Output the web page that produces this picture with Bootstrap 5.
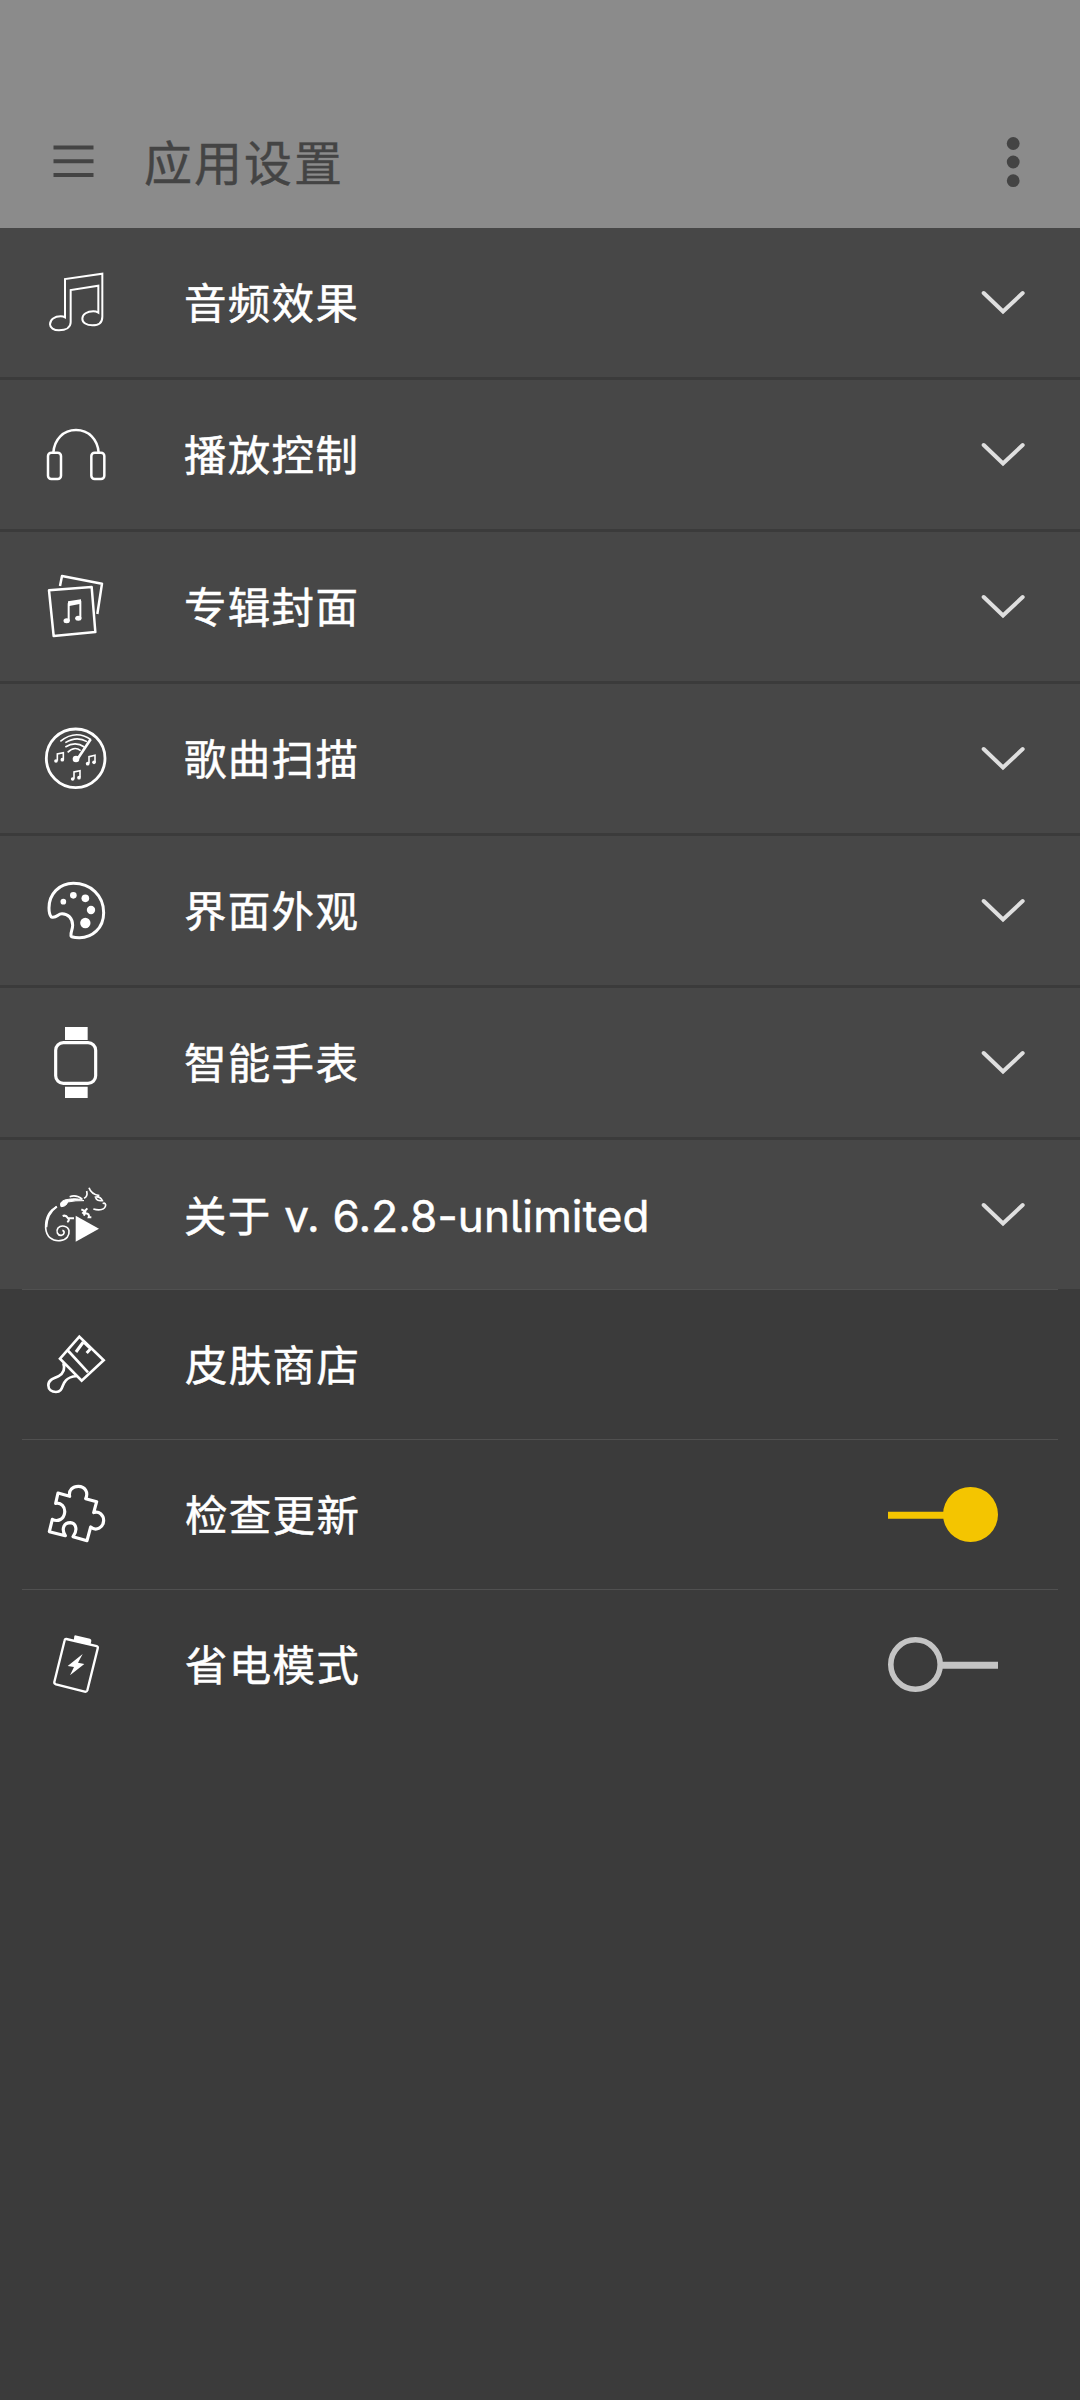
<!DOCTYPE html>
<html lang="zh-CN">
<head>
<meta charset="utf-8">
<meta name="viewport" content="width=device-width, initial-scale=1">
<title>应用设置</title>
<link href="https://cdn.jsdelivr.net/npm/bootstrap@5.3.0/dist/css/bootstrap.min.css" rel="stylesheet">
<style>
  body { background: #3b3b3b; font-family: Inter, "Noto Sans CJK SC", sans-serif; min-height: 2400px; }
  .app-bar { height: 228px; background: #8b8b8b; padding: 96px 56px 0 53px; color: #444; }
  .app-title { font-size: 48px; letter-spacing: 2px; line-height: 60px; margin: 4px 0 0 50px; font-weight: 400; -webkit-text-stroke: .4px #444; }
  .group-row { height: 149px; background: #474747; margin-bottom: 3px; padding: 0 54px 0 40px; }
  .group-row:last-child { margin-bottom: 0; }
  .plain-list { margin: 0 22px; }
  .plain-row { height: 150px; border-top: 1px solid #505050; padding: 0 60px 0 18px; }
  .plain-row .row-label { margin-left: 75px; }
  .row-icon { width: 70px; height: 81px; flex: none; fill: none; stroke: #fff; }
  .row-label { color: #fff; font-size: 42.5px; letter-spacing: 1.3px; line-height: 60px; margin: 3px 0 0 74px; font-weight: 400; white-space: pre; -webkit-text-stroke: .5px #fff; }
  .version-text { font-size: 44px; font-feature-settings: "cv05"; letter-spacing: .15px; }
  .chevron { width: 46px; height: 26px; margin-left: auto; fill: none; stroke: #dfdfdf; stroke-width: 4; stroke-linecap: round; }
</style>
</head>
<body>
<header class="app-bar d-flex align-items-center">
  <svg width="41" height="34" viewBox="0 0 41 34" stroke="#444" stroke-width="4"><path d="M0.500 2.500H40.500M0.500 16.300H40.500M0.500 30H40.500"/></svg>
  <h1 class="app-title mb-0">应用设置</h1>
  <svg class="ms-auto" width="22" height="52" viewBox="0 0 22 52" fill="#444"><circle cx="11.200" cy="7.500" r="6.400"/><circle cx="11.200" cy="26" r="6.400"/><circle cx="11.200" cy="44.700" r="6.400"/></svg>
</header>
<main>
  <section>
    <div class="group-row d-flex align-items-center">
      <svg class="row-icon" viewBox="120 486 210 243" stroke-width="6"><path d="M195 652V537L307 521V650C307 667 296 676 277 676C260 676 247 668 247 656C247 642 262 634 280 634Q288 634 295 638V557L212 570V667C212 682 198 691 177 691C161 691 150 683 150 673C150 658 164 649 182 649Q190 649 195 652Z"/></svg>
      <span class="row-label">音频效果</span>
      <svg class="chevron" viewBox="0 0 46 26"><path d="M3.700 3L23 21.500L42.700 3"/></svg>
    </div>
    <div class="group-row d-flex align-items-center">
      <svg class="row-icon" viewBox="30 42 210 243" stroke-width="7.500"><path d="M70 158C73 118 100 90 138 90C176 90 203 118 206 158"/><rect x="54" y="158" width="39" height="79" rx="10"/><rect x="184" y="158" width="39" height="79" rx="10"/></svg>
      <span class="row-label">播放控制</span>
      <svg class="chevron" viewBox="0 0 46 26"><path d="M3.700 3L23 21.500L42.700 3"/></svg>
    </div>
    <div class="group-row d-flex align-items-center">
      <svg class="row-icon" viewBox="30 498 210 243" stroke-width="7.500" stroke-linejoin="round"><path d="M57 571L185 561L196 696L71 708ZM90 558L96 528L216 551L202 642"/><path d="M116 663V611L151 604V655" stroke-width="6"/><path d="M114 604L153 598V611L114 619Z" fill="#fff" stroke="none"/><g fill="#fff" stroke="none"><ellipse cx="110" cy="662" rx="9.500" ry="7.500"/><ellipse cx="145" cy="655" rx="9.500" ry="7.500"/></g></svg>
      <span class="row-label">专辑封面</span>
      <svg class="chevron" viewBox="0 0 46 26"><path d="M3.700 3L23 21.500L42.700 3"/></svg>
    </div>
    <div class="group-row d-flex align-items-center">
      <svg class="row-icon" viewBox="30 54 210 243" stroke-width="4.800"><circle cx="137" cy="175" r="88" stroke-width="8.500"/><path d="M91 124Q137 87 183 119M106 128Q140 107 171 125M106 141Q136 122 163 141M113 157Q133 137 152 152"/><path d="M182 118L143 176" stroke-width="8"/><circle cx="138" cy="177" r="10" fill="#fff" stroke="none"/>
        <g id="smallNote"><path d="M82 182V162L100 158V178"/><circle cx="78" cy="183" r="5.500" fill="#fff" stroke="none"/><circle cx="97" cy="179" r="5.500" fill="#fff" stroke="none"/></g><use href="#smallNote" x="95" y="8"/><use href="#smallNote" x="50" y="54"/></svg>
      <span class="row-label">歌曲扫描</span>
      <svg class="chevron" viewBox="0 0 46 26"><path d="M3.700 3L23 21.500L42.700 3"/></svg>
    </div>
    <div class="group-row d-flex align-items-center">
      <svg class="row-icon" viewBox="30 510 210 243" stroke-width="9"><path d="M64 651Q57 643 57 624C57 582 88 550 130 550C182 550 221 587 221 638C221 685 186 714 147 713Q121 713 123 705C122 696 128 688 128 676C128 655 114 641 96 641C82 641 82 655 64 651Z" stroke-linejoin="round"/><g fill="#fff" stroke="none"><circle cx="100" cy="605" r="8.500"/><circle cx="130" cy="586" r="10"/><circle cx="166" cy="595" r="11.500"/><circle cx="183" cy="630" r="12.500"/><circle cx="166" cy="669" r="15.500"/></g></svg>
      <span class="row-label">界面外观</span>
      <svg class="chevron" viewBox="0 0 46 26"><path d="M3.700 3L23 21.500L42.700 3"/></svg>
    </div>
    <div class="group-row d-flex align-items-center">
      <svg class="row-icon" viewBox="30 66 210 243"><rect x="77" y="128" width="120" height="122" rx="23" stroke-width="9.500"/><path d="M105 81H173V120H105ZM105 260H173V294H105Z" fill="#fff" stroke="none"/></svg>
      <span class="row-label">智能手表</span>
      <svg class="chevron" viewBox="0 0 46 26"><path d="M3.700 3L23 21.500L42.700 3"/></svg>
    </div>
    <div class="group-row d-flex align-items-center">
      <svg class="row-icon" viewBox="30 522 210 243" stroke-width="5"><path d="M137 647L207 686L137 725Z" fill="#fff" stroke="none"/><path d="M81 620C58 631 46 655 47 684C49 711 67 724 90 722C110 720 119 706 117 692C114 677 93 674 84 684C77 694 83 707 94 706C104 704 105 693 97 691"/><path d="M80 620C60 634 50 652 49 682" stroke-width="6"/><path d="M93 620C88 609 96 600 115 598Q142 593 162 602Q138 601 113 606Q109 620 93 620Z" fill="#fff" stroke-width="3"/><path d="M119 590Q140 583 157 598M162 595Q174 590 170 573M177 563Q183 582 208 587M194 592Q209 587 217 602Q202 604 197 594M218 611Q225 606 227 615C226 630 207 632 190 627"/><path d="M98 648Q108 644 114 655L132 655M112 667Q118 662 117 653M154 628L166 634L162 647M166 640Q180 641 176 652L184 652M157 641L172 625" stroke-width="6"/></svg>
      <span class="row-label">关于<span class="version-text"> v. 6.2.8-unlimited</span></span>
      <svg class="chevron" viewBox="0 0 46 26"><path d="M3.700 3L23 21.500L42.700 3"/></svg>
    </div>
  </section>
  <section class="plain-list">
    <div class="plain-row d-flex align-items-center">
      <svg class="row-icon" viewBox="120 162 210 243" stroke-width="8"><path d="M238 200L311 271L245 332L180 266ZM205 243L264 307M190 279C196 297 190 311 175 319C158 326 145 331 145 346C145 358 155 366 168 366C190 366 184 344 197 332C207 320 218 319 230 318"/><path d="M250 216L228 246M254 219L272 236L260 249" stroke-width="9"/></svg>
      <span class="row-label">皮肤商店</span>
    </div>
    <div class="plain-row d-flex align-items-center">
      <svg class="row-icon" viewBox="120 72 210 243" stroke-width="9.500"><path d="M174 129L209 139C205 120 219 109 235 109C255 109 266 127 257 146L290 155L281 188C297 181 311 196 311 212C310 232 289 245 272 231L261 272L219 260C233 242 230 220 211 218C190 218 184 239 196 257L148 245L157 208C174 217 192 207 194 188C196 170 183 157 167 160Z" stroke-linejoin="round"/></svg>
      <span class="row-label">检查更新</span>
      <svg class="ms-auto" width="110" height="55" viewBox="0 0 110 55"><path d="M0 28.200H60" stroke="#f4c500" stroke-width="7"/><circle cx="82.500" cy="27.500" r="27.500" fill="#f4c500"/></svg>
    </div>
    <div class="plain-row d-flex align-items-center">
      <svg class="row-icon" viewBox="120 522 210 243" stroke-width="7"><path d="M199 567L290 588Q295 590 293 596L262 721Q260 726 254 725L168 703Q162 701 163 696L194 571Q195 566 199 567Z"/><path d="M225 556L270 566Q275 568 274 573L271 586L221 574L223 558ZM248 612L203 648L222 651L210 676L253 642L234 638Z" fill="#fff" stroke="none"/></svg>
      <span class="row-label">省电模式</span>
      <svg class="ms-auto" width="110" height="55" viewBox="0 0 110 55" fill="none" stroke="#c4c4c4"><circle cx="27.500" cy="27.500" r="24.700" stroke-width="5.600"/><path d="M54 28.200H110" stroke-width="7"/></svg>
    </div>
  </section>
</main>
<script src="https://cdn.jsdelivr.net/npm/bootstrap@5.3.0/dist/js/bootstrap.bundle.min.js"></script>
</body>
</html>
